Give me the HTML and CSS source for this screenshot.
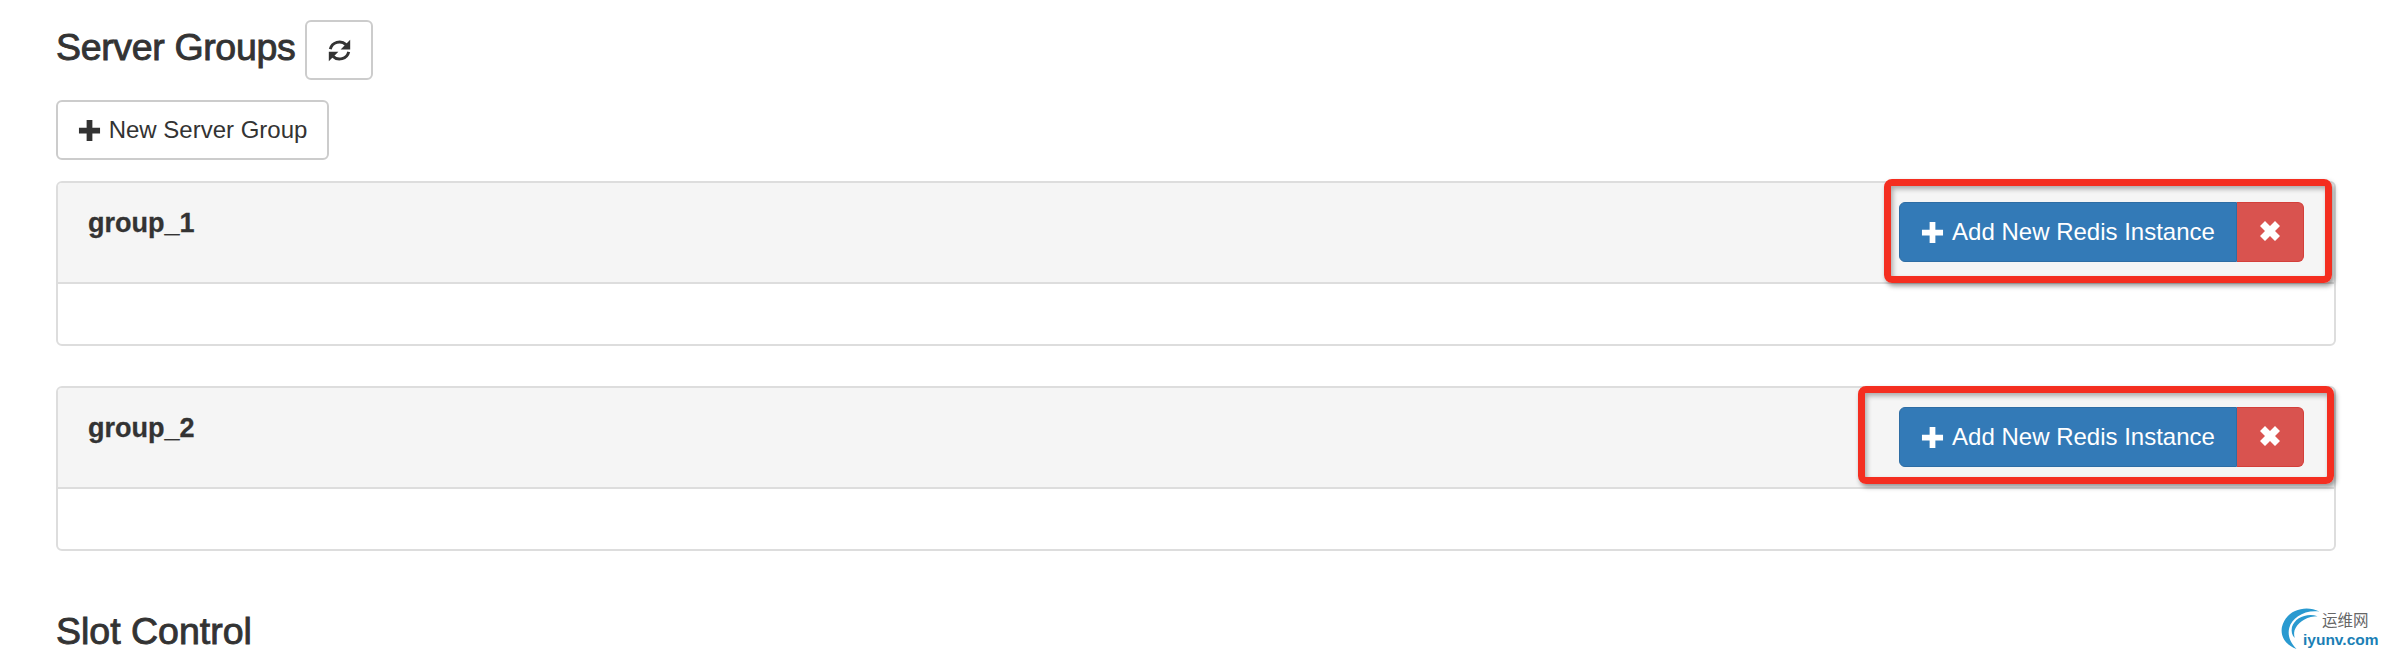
FILE: index.html
```html
<!DOCTYPE html>
<html lang="en">
<head>
    <meta charset="UTF-8">
    <title>Server Groups</title>
    <link rel="stylesheet" href="styles.css">
</head>
<body>
    <div class="section-head">
        <h3 class="section-title server-title">Server Groups</h3>
        <button class="btn btn-icon">
            <svg class="icon-refresh" viewBox="0 0 24 24">
                <path class="arc" d="M3.800 10.800A8.400 8.400 0 0 1 17.800 6.800"/>
                <path class="arc" d="M20.200 13.200A8.400 8.400 0 0 1 6.200 17.200"/>
                <path d="M21.500 2.500v8.500h-8.500z"/>
                <path d="M2.500 21.500v-8.500h8.500z"/>
            </svg>
        </button>
    </div>

    <button class="btn btn-new">
        <svg class="icon-plus" viewBox="0 0 24 24"><path d="M9 1h6v8h8v6h-8v8H9v-8H1V9h8z"/></svg>
        New Server Group
    </button>

    <div class="panel">
        <div class="panel-heading">
            <div class="panel-title">group_1</div>
            <div class="btn-group">
                <button class="btn btn-primary">
                    <svg class="icon-plus" viewBox="0 0 24 24"><path d="M9 1h6v8h8v6h-8v8H9v-8H1V9h8z"/></svg>
                    Add New Redis Instance
                </button>
                <button class="btn btn-danger">
                    <svg class="icon-remove" viewBox="0 0 24 24"><path d="M7 2l5 5 5-5 5 5-5 5 5 5-5 5-5-5-5 5-5-5 5-5-5-5z"/></svg>
                </button>
            </div>
        </div>
        <div class="panel-body"></div>
        <div class="mark mark-first"></div>
    </div>

    <div class="panel">
        <div class="panel-heading">
            <div class="panel-title">group_2</div>
            <div class="btn-group">
                <button class="btn btn-primary">
                    <svg class="icon-plus" viewBox="0 0 24 24"><path d="M9 1h6v8h8v6h-8v8H9v-8H1V9h8z"/></svg>
                    Add New Redis Instance
                </button>
                <button class="btn btn-danger">
                    <svg class="icon-remove" viewBox="0 0 24 24"><path d="M7 2l5 5 5-5 5 5-5 5 5 5-5 5-5-5-5 5-5-5 5-5-5-5z"/></svg>
                </button>
            </div>
        </div>
        <div class="panel-body"></div>
        <div class="mark mark-second"></div>
    </div>

    <h3 class="section-title slot-title">Slot Control</h3>

    <div class="watermark">
        <svg class="watermark-arc" viewBox="0 0 46 46">
            <path d="M42 5C26-3 5 4 1 22c-2 11 5 20 16 24C10 39 7 31 9 23 12 12 25 3 42 5z"/>
            <path d="M40 10C28 6 15 12 12 22c-1 5 0 9 3 12-1-4-1-8 1-11 4-8 14-13 24-13z"/>
        </svg>
        <span class="watermark-cn">运维网</span>
        <span class="watermark-en">iyunv.com</span>
    </div>
</body>
</html>
```

FILE: styles.css
```css
html, body {
    height: 654px;
    overflow: hidden;
}

body {
    margin: 0;
    padding: 20px 48px 0 56px;
    box-sizing: border-box;
    background-color: #fff;
    color: #333;
    font-family: "Liberation Sans", Arial, sans-serif;
    position: relative;
}

.section-head {
    display: flex;
    align-items: center;
    gap: 10px;
    margin-bottom: 20px;
}

.section-title {
    margin: 0;
    font-size: 37.500px;
    font-weight: normal;
    line-height: 50px;
    -webkit-text-stroke: 0.9px #333;
}

.server-title {
    padding-bottom: 6px;
    letter-spacing: -0.35px;
}

.slot-title {
    margin-top: 55px;
}

.btn {
    display: inline-flex;
    align-items: center;
    justify-content: center;
    height: 60px;
    margin: 0;
    padding: 0;
    border: 2px solid #ccc;
    border-radius: 6px;
    background-color: #fff;
    color: #333;
    font-family: inherit;
    font-size: 24px;
    white-space: nowrap;
    cursor: pointer;
}

.btn-icon {
    width: 68px;
}

.btn svg {
    fill: currentColor;
    flex: none;
}

.icon-refresh {
    width: 27px;
    height: 27px;
}

.icon-refresh .arc {
    fill: none;
    stroke: currentColor;
    stroke-width: 2.600;
}

.icon-plus {
    width: 23px;
    height: 23px;
    margin-right: 8px;
}

.icon-remove {
    width: 24px;
    height: 24px;
    margin-bottom: 2px;
}

.btn-new {
    display: flex;
    width: 273px;
    margin-bottom: 21px;
}

.panel {
    position: relative;
    margin-bottom: 40px;
    border: 2px solid #ddd;
    border-radius: 6px;
    background-color: #fff;
}

.panel-heading {
    display: flex;
    justify-content: space-between;
    align-items: flex-start;
    height: 101px;
    padding: 19px 30px 0;
    box-sizing: border-box;
    border-bottom: 2px solid #ddd;
    border-radius: 4px 4px 0 0;
    background-color: #f5f5f5;
}

.panel-title {
    margin-top: 1px;
    font-size: 27px;
    font-weight: bold;
    line-height: 40px;
    -webkit-text-stroke: 0.3px #333;
}

.panel-body {
    height: 60px;
}

.btn-group {
    display: flex;
}

.btn-primary {
    width: 338px;
    border: 1px solid #2e6da4;
    border-radius: 6px 0 0 6px;
    background-color: #337ab7;
    color: #fff;
}

.btn-danger {
    width: 67px;
    border: 1px solid #d43f3a;
    border-left: none;
    border-radius: 0 6px 6px 0;
    background-color: #d9534f;
    color: #fff;
}

/* red annotation boxes drawn over the screenshot */
.mark {
    position: absolute;
    box-sizing: border-box;
    border: 7px solid #f42e20;
    border-radius: 8px;
    box-shadow: 2px 3px 5px rgba(0, 0, 0, 0.4), inset 2px 3px 5px rgba(0, 0, 0, 0.3);
}

.mark-first {
    top: -4px;
    right: 2px;
    width: 448px;
    height: 104px;
}

.mark-second {
    top: -2px;
    right: 0;
    width: 476px;
    height: 98px;
}

.watermark {
    position: absolute;
    left: 2281px;
    top: 607px;
    width: 100px;
    height: 42px;
}

.watermark-arc {
    position: absolute;
    left: 0;
    top: 0;
    width: 42px;
    height: 42px;
    fill: #2a9ad0;
}

.watermark-cn {
    position: absolute;
    left: 41px;
    top: 3px;
    color: #666;
    font-family: "Noto Sans CJK SC", sans-serif;
    font-size: 15.500px;
    line-height: 18px;
}

.watermark-en {
    position: absolute;
    left: 22px;
    top: 23px;
    color: #1b7fb5;
    font-size: 15.500px;
    font-weight: bold;
    line-height: 20px;
}
```
